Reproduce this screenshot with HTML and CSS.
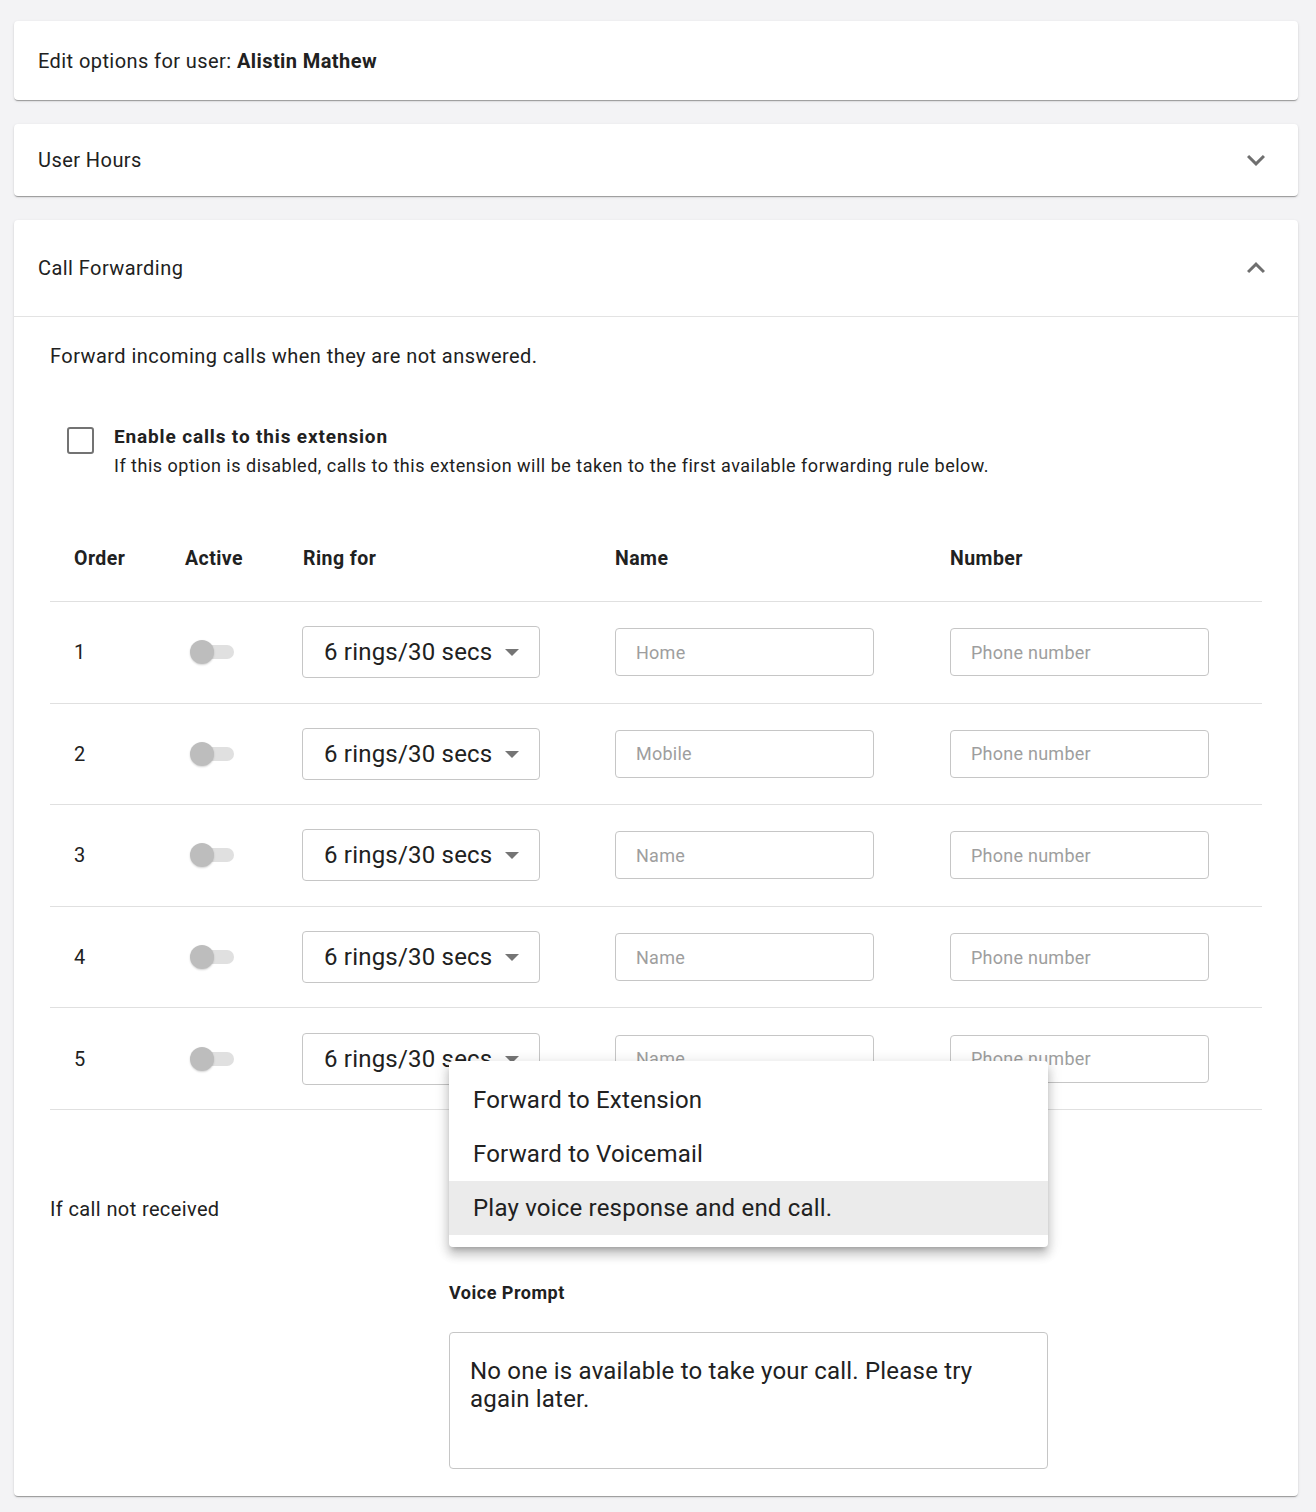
FILE: index.html
```html
<!DOCTYPE html>
<html lang="en">
<head>
<meta charset="utf-8">
<title>Edit user options</title>
<link rel="stylesheet" href="styles.css">
</head>
<body>
<div class="page">
  <section class="card card-title">
    <p>Edit options for user: <strong>Alistin Mathew</strong></p>
  </section>

  <section class="card">
    <div class="panel-head">
      <span>User Hours</span>
      <svg class="chev" viewBox="0 0 24 24" width="36" height="36"><path d="M16.59 8.59L12 13.17 7.41 8.59 6 10l6 6 6-6z"/></svg>
    </div>
  </section>

  <section class="card">
    <div class="panel-head open">
      <span>Call Forwarding</span>
      <svg class="chev" viewBox="0 0 24 24" width="36" height="36"><path d="M12 8l-6 6 1.41 1.41L12 10.83l4.59 4.58L18 14z"/></svg>
    </div>
    <div class="panel-body">
      <p class="intro">Forward incoming calls when they are not answered.</p>

      <div class="check">
        <span class="box"></span>
        <div class="check-text">
          <strong>Enable calls to this extension</strong>
          <span>If this option is disabled, calls to this extension will be taken to the first available forwarding rule below.</span>
        </div>
      </div>

      <div class="table">
        <div class="row head">
          <div>Order</div><div>Active</div><div>Ring for</div><div>Name</div><div>Number</div>
        </div>
        <div class="row">
          <div>1</div>
          <div><span class="toggle"><span class="track"></span><span class="thumb"></span></span></div>
          <div><div class="select">6 rings/30 secs<span class="caret"></span></div></div>
          <div><div class="input">Home</div></div>
          <div><div class="input">Phone number</div></div>
        </div>
        <div class="row">
          <div>2</div>
          <div><span class="toggle"><span class="track"></span><span class="thumb"></span></span></div>
          <div><div class="select">6 rings/30 secs<span class="caret"></span></div></div>
          <div><div class="input">Mobile</div></div>
          <div><div class="input">Phone number</div></div>
        </div>
        <div class="row">
          <div>3</div>
          <div><span class="toggle"><span class="track"></span><span class="thumb"></span></span></div>
          <div><div class="select">6 rings/30 secs<span class="caret"></span></div></div>
          <div><div class="input">Name</div></div>
          <div><div class="input">Phone number</div></div>
        </div>
        <div class="row">
          <div>4</div>
          <div><span class="toggle"><span class="track"></span><span class="thumb"></span></span></div>
          <div><div class="select">6 rings/30 secs<span class="caret"></span></div></div>
          <div><div class="input">Name</div></div>
          <div><div class="input">Phone number</div></div>
        </div>
        <div class="row">
          <div>5</div>
          <div><span class="toggle"><span class="track"></span><span class="thumb"></span></span></div>
          <div><div class="select">6 rings/30 secs<span class="caret"></span></div></div>
          <div><div class="input">Name</div></div>
          <div><div class="input">Phone number</div></div>
        </div>
      </div>

      <div class="fallback">
        <div class="fallback-label">If call not received</div>
        <div class="fallback-field">
          <div class="select-wrap">
            <div class="select wide">Play voice response and end call.<span class="caret"></span></div>
            <ul class="menu">
              <li>Forward to Extension</li>
              <li>Forward to Voicemail</li>
              <li class="active">Play voice response and end call.</li>
            </ul>
          </div>
          <div class="vp-label">Voice Prompt</div>
          <div class="textarea">No one is available to take your call. Please try again later.</div>
        </div>
      </div>
    </div>
  </section>
</div>
</body>
</html>
```

FILE: styles.css
```css
* { box-sizing: border-box; }

body {
  margin: 0;
  background: #f3f3f5;
  font-family: Roboto, "Liberation Sans", sans-serif;
  color: #212121;
}

p { margin: 0; }

.page {
  padding: 21px 18px 16px 14px;
  display: flex;
  flex-direction: column;
  gap: 24px;
}

.card {
  background: #fff;
  border-radius: 4px;
  box-shadow: 0 2px 1px -1px rgba(0,0,0,.2), 0 1px 1px 0 rgba(0,0,0,.14), 0 1px 3px 0 rgba(0,0,0,.12);
}

.card-title {
  padding: 28px 24px 27px;
  font-size: 20px;
  line-height: 24px;
  letter-spacing: 0.42px;
}
.card-title strong { font-weight: 700; }

.panel-head {
  display: flex;
  align-items: center;
  justify-content: space-between;
  height: 72px;
  padding: 0 24px;
  font-size: 20px;
  line-height: 24px;
  letter-spacing: 0.44px;
}
.panel-head.open {
  height: 97px;
  border-bottom: 1px solid #e3e3e3;
}
.chev { fill: #6f6f6f; }

.panel-body {
  padding: 27px 36px 27px;
}

.intro {
  font-size: 20px;
  line-height: 24px;
  letter-spacing: 0.44px;
}

.check {
  display: flex;
  align-items: flex-start;
  gap: 20px;
  margin: 54px 0 0 17px;
}
.box {
  width: 27px;
  height: 27px;
  margin-top: 5px;
  border: 2.5px solid #737373;
  border-radius: 3px;
  flex: none;
}
.check-text {
  display: flex;
  flex-direction: column;
  font-size: 18px;
  line-height: 29px;
  letter-spacing: 0.5px;
}
.check-text strong {
  font-weight: 700;
  font-size: 19px;
  letter-spacing: 0.85px;
}

.table { margin-top: 37px; }
.row {
  display: grid;
  grid-template-columns: 111px 118px 312px 335px 1fr;
  align-items: center;
  padding-left: 24px;
  height: 101.6px;
  border-bottom: 1px solid #e0e0e0;
  font-size: 20px;
}
.row.head {
  height: 85px;
  font-weight: 700;
  font-size: 19.5px;
  letter-spacing: 0.45px;
  padding-bottom: 2px;
}

.toggle {
  position: relative;
  display: block;
  width: 46px;
  height: 24px;
  margin-left: 5px;
}
.track {
  position: absolute;
  left: 8px;
  top: 5px;
  width: 36px;
  height: 14px;
  border-radius: 7px;
  background: #e0e0e0;
}
.thumb {
  position: absolute;
  left: 0;
  top: 0;
  width: 24px;
  height: 24px;
  border-radius: 50%;
  background: #bdbdbd;
  box-shadow: 0 1px 2px rgba(0,0,0,.18);
}

.select {
  position: relative;
  display: flex;
  align-items: center;
  width: 238px;
  height: 52px;
  margin-left: -1px;
  padding-left: 21px;
  border: 1px solid #c6c6c6;
  border-radius: 4px;
  font-size: 24px;
  letter-spacing: 0.2px;
  color: #212121;
}
.caret {
  position: absolute;
  right: 20px;
  top: 50%;
  margin-top: -3px;
  border-left: 7px solid transparent;
  border-right: 7px solid transparent;
  border-top: 7px solid #757575;
}

.input {
  display: flex;
  align-items: center;
  width: 259px;
  height: 48px;
  padding-left: 20px;
  border: 1px solid #c6c6c6;
  border-radius: 4px;
  font-size: 18px;
  letter-spacing: 0.25px;
  color: #9e9e9e;
}

.fallback {
  display: flex;
  margin-top: 72px;
}
.fallback-label {
  width: 399px;
  height: 54px;
  line-height: 54px;
  font-size: 20px;
  letter-spacing: 0.38px;
  flex: none;
}
.fallback-field {
  width: 599px;
}
.select-wrap { position: relative; }
.select.wide {
  width: 599px;
  height: 54px;
  margin-left: 0;
}
.menu {
  position: absolute;
  left: 0;
  top: -121px;
  width: 599px;
  margin: 0;
  padding: 12px 0;
  list-style: none;
  background: #fff;
  border-radius: 4px;
  box-shadow: 0 5px 5px -3px rgba(0,0,0,.2), 0 8px 10px 1px rgba(0,0,0,.14), 0 3px 14px 2px rgba(0,0,0,.12);
  z-index: 10;
}
.menu li {
  height: 54px;
  line-height: 54px;
  padding-left: 24px;
  font-size: 24px;
  letter-spacing: 0.2px;
  color: #212121;
}
.menu li.active { background: #ebebeb; }

.vp-label {
  margin-top: 46px;
  font-size: 18px;
  line-height: 22px;
  font-weight: 700;
  letter-spacing: 0.5px;
}
.textarea {
  margin-top: 28px;
  height: 137px;
  padding: 24px 20px 0;
  border: 1px solid #c6c6c6;
  border-radius: 4px;
  font-size: 24px;
  line-height: 28px;
  letter-spacing: 0.2px;
}
```
